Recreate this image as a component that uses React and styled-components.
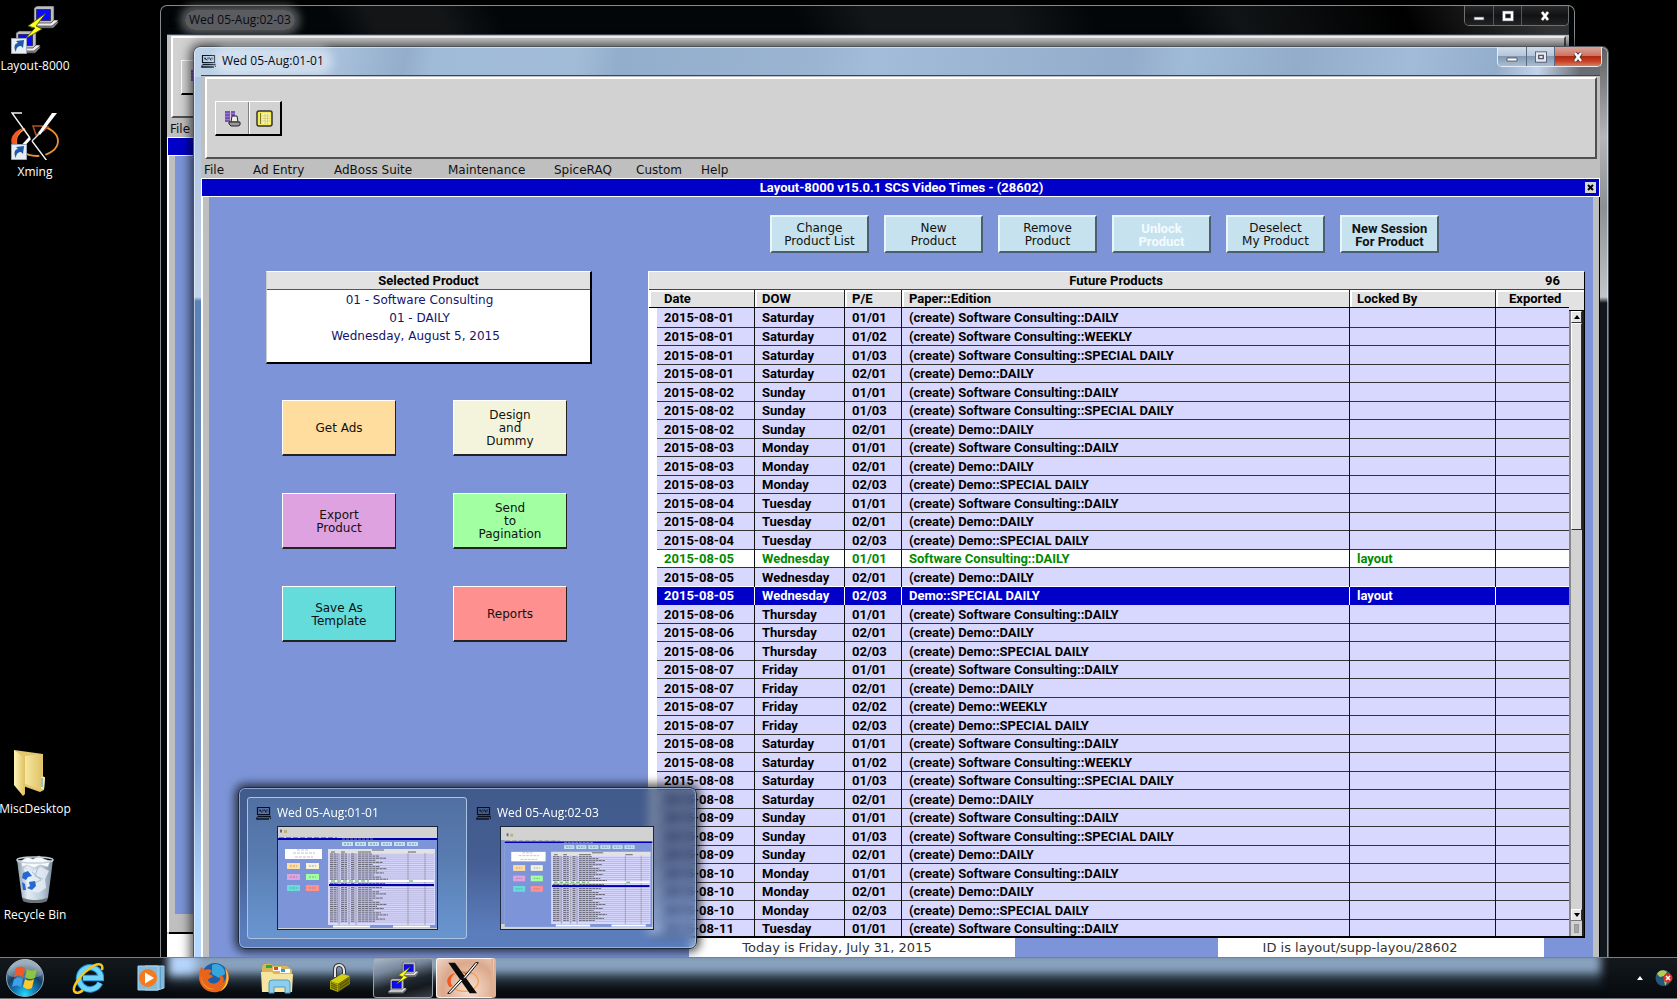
import React from "react";
import styled, { createGlobalStyle, css } from "styled-components";

const UI = `"DejaVu Sans", sans-serif`;
const BOLD = `Roboto, "Liberation Sans", sans-serif`;
const SHELL = `"Open Sans", "Noto Sans", sans-serif`;

const Global = createGlobalStyle`
  * { box-sizing: border-box; }
  body { margin: 0; background: #000; overflow: hidden; }
  button { font: inherit; color: inherit; background: none; border: 0; padding: 0; margin: 0; }
  svg { display: block; }
`;

/* ---------- desktop ---------- */

const Desktop = styled.main`
  position: relative;
  height: 100vh;
  overflow: hidden;
  background: #000;
  font-family: ${SHELL};
  font-size: 12px;
`;

const Shortcut = styled.a`
  position: absolute;
  left: 0;
  ${(p) => (p.$top !== undefined ? `top: ${p.$top}px;` : `bottom: ${p.$bottom}px;`)}
  width: 70px;
  display: flex;
  flex-direction: column;
  align-items: center;
  gap: 4px;
  color: #fff;
  text-decoration: none;
  line-height: 16px;
  white-space: nowrap;
`;

/* ---------- windows ---------- */

const Win = styled.section`
  position: absolute;
  left: ${(p) => p.$left}px;
  right: ${(p) => p.$right}px;
  top: ${(p) => p.$top}px;
  bottom: 0;
  display: flex;
  flex-direction: column;
  border-radius: 7px 7px 0 0;
  padding: ${(p) => (p.$active ? "0 8px 0 7px" : "0 5px 0 6px")};
  border: 1px solid ${(p) => (p.$active ? "#4d545c" : "#868a88")};
  border-bottom: 0;
  background: #020608;
  ${(p) =>
    p.$active &&
    css`
      box-shadow: inset 0 0 0 1px rgba(240, 248, 255, 0.55), 0 0 12px 2px rgba(0, 0, 0, 0.75);
      background:
        linear-gradient(#5c5e60 0, #b4b6ba 90px, #8c8f94 160px, #c2c5ca 250px, #11161c 256px, #11161c) right / 8px 100% no-repeat,
        linear-gradient(100deg, #bfd3e8 0, #a9c1dc 10%, #93adcb 15%, #a0bbd8 17%, #a2bcd8 27%, #93aecc 30%, #9ab4d2 44%, #a2bcd9 48%, #93accb 66%, #a0bbd8 70%, #92acca 78%, #a2bbd9 86%, #93adcc 92%, #c2d4ea 95%, #6a6e74 98%) top / 100% 30px no-repeat,
        linear-gradient(#a9c0dc 0, #c4d4ea 250px, #5b82b6 254px, #7b9dd0 75%, #b5d8ff 90%);
    `}
`;

const TitleBar = styled.header`
  flex: none;
  height: 28px;
  display: flex;
  align-items: center;
  padding-left: ${(p) => (p.$active ? 0 : 1)}px;
  gap: 6px;
  color: #0a0a14;
  background: ${(p) =>
    p.$active ? "none" : "linear-gradient(65deg, #0000 12%, #131517 15%, #131517 20%, #0000 24%, #0000 45%, #131618 50%, #131618 60%, #0000 66%, #0000 72%, #111416 76%, #000 88%, #333 98%)"};
`;

const TitleText = styled.h1`
  flex: 1;
  margin: 0;
  font: 400 12px/20px ${SHELL};
  span {
    display: inline-block;
    padding: 0 4px;
    margin-left: -4px;
    border-radius: 10px;
    background: ${(p) => (p.$active ? "rgba(235,243,252,.5)" : "rgba(120,122,124,.75)")};
    box-shadow: 0 0 8px 5px ${(p) => (p.$active ? "rgba(235,243,252,.5)" : "rgba(120,122,124,.7)")};
  }
`;

const Controls = styled.div`
  align-self: flex-start;
  display: flex;
  height: 20px;
  margin-right: ${(p) => (p.$active ? -2 : 0)}px;
  border: 1px solid ${(p) => (p.$active ? "#e6edf4" : "#6e7072")};
  border-top: 0;
  border-radius: 0 0 5px 5px;
  overflow: hidden;
`;

const Control = styled.button`
  width: ${(p) => (p.$close ? 47 : 28)}px;
  display: flex;
  align-items: center;
  justify-content: center;
  border-left: 1px solid ${(p) => (p.$active ? "#5b6c80" : "#55585a")};
  &:first-child { border-left: 0; }
  background: ${(p) =>
    !p.$active
      ? "linear-gradient(#26282a, #101214 50%, #202224)"
      : p.$close
      ? "linear-gradient(#d9a49a 0, #cc7464 45%, #b02a12 50%, #c84024 75%, #d98060)"
      : "linear-gradient(#cfdcea 0, #b7c7d9 45%, #8299b3 50%, #a9bdd2)"};
`;

const Client = styled.div`
  flex: 1;
  min-height: 0;
  display: flex;
  flex-direction: column;
  background: #bfbfbf;
  border-top: 1px solid #3c4650;
  padding-top: 1px;
  font-family: ${UI};
`;

const ToolbarPanel = styled.div`
  flex: none;
  height: 82px;
  margin: 0 3px 0 4px;
  padding: 22px 8px;
  background: #d2d2d2;
  border: 2px solid;
  border-color: #fff #505050 #505050 #fff;
`;

const ToolGroup = styled.div`
  display: inline-flex;
  height: 35px;
  border: 1px solid;
  border-color: #fff #000 #000 #fff;
  border-right-width: 2px;
  border-bottom-width: 2px;
`;

const ToolButton = styled.button`
  width: 32px;
  display: flex;
  align-items: center;
  justify-content: center;
  & + & { border-left: 1px solid #808080; box-shadow: inset 1px 0 #fff; }
`;

const MenuBar = styled.nav`
  flex: none;
  height: 19px;
  display: flex;
  padding-left: 3px;
  font-size: 12px;
  line-height: 23px;
  color: #111;
  white-space: nowrap;
`;

const MenuItem = styled.button`
  width: ${(p) => p.$width}px;
  text-align: left;
`;

const ProgramBar = styled.div`
  flex: none;
  height: 19px;
  display: flex;
  align-items: center;
  justify-content: center;
  border: 1px solid #fff;
  background: #0000c8;
  color: #fff;
  font: 700 13px/17px ${BOLD};
  padding-right: 3px;
  h2 { flex: 1; margin: 0; padding-left: 16px; font: inherit; text-align: center; }
`;

const ProgramClose = styled.button`
  width: 11px;
  height: 11px;
  background: #d8d8d8;
  display: flex;
  align-items: center;
  justify-content: center;
`;

const Body = styled.div`
  flex: 1;
  min-height: 0;
  display: flex;
  flex-direction: column;
  padding: 18px 8px 42px 0;
  background: #7d95d8;
  border-left: 6px solid #bfbfbf;
  border-right: 6px solid #bfbfbf;
  margin: 0 1px 0 2px;
  box-shadow: -2px 0 #fff, 1px 0 #000;
`;

const ActionRow = styled.div`
  flex: none;
  display: flex;
  justify-content: center;
  gap: 15px;
  padding: 0 24px 0 439px;
`;

const ActionButton = styled.button`
  width: 99px;
  height: 38px;
  padding-top: 2px;
  background: #c6e2ee;
  border: 2px solid;
  border-color: #e8f6fc #4c5f72 #4c5f72 #e8f6fc;
  font: ${(p) => (p.$strong ? `700 13px/13px ${BOLD}` : `400 12px/13px ${UI}`)};
  color: ${(p) => (p.$off ? "#f4fbff" : "#111")};
  white-space: pre-line;
`;

const Split = styled.div`
  flex: 1;
  min-height: 0;
  display: flex;
  margin-top: 18px;
`;

const Side = styled.div`
  flex: none;
  width: 439px;
  padding-left: 57px;
`;

const SelectedCard = styled.section`
  width: 326px;
  height: 93px;
  background: #fff;
  border: 1px solid;
  border-color: #fff #000 #000 #ccc;
  border-right-width: 2px;
  border-bottom-width: 2px;
  color: #14146a;
  font-size: 12px;
  line-height: 18px;
  text-align: center;
  p { margin: 0 18px 0 0; }
  p:last-child { margin-right: 26px; }
`;

const CardTitle = styled.h3`
  margin: 0 0 1px;
  height: 18px;
  background: #e2e2e2;
  border-bottom: 1px solid #555;
  color: #000;
  font: 700 13px/18px ${BOLD};
`;

const TaskGrid = styled.div`
  display: grid;
  grid-template-columns: 114px 114px;
  gap: 37px 57px;
  padding: 36px 0 0 16px;
`;

const TaskButton = styled.button`
  height: 56px;
  padding-top: 2px;
  background: ${(p) => p.$color};
  border: 1px solid;
  border-color: #fff #222 #222 #fff;
  border-bottom-width: 2px;
  font: 400 12px/13px ${UI};
  color: #111;
  white-space: pre-line;
`;

/* ---------- product list ---------- */

const ListPanel = styled.section`
  flex: 1;
  min-width: 0;
  display: flex;
  flex-direction: column;
  background: #fff;
  border: 1px solid;
  border-color: #fff #000 #000 #fff;
  border-bottom-width: 2px;
`;

const ListTitle = styled.div`
  flex: none;
  height: 18px;
  display: flex;
  background: #e2e2e2;
  border-bottom: 1px solid #444;
  font: 700 13px/18px ${BOLD};
  color: #000;
  padding-right: 24px;
  h3 { flex: 1; margin: 0; padding-left: 38px; font: inherit; text-align: center; }
`;

const ListBody = styled.div`
  flex: 1;
  min-height: 0;
  display: flex;
  overflow: hidden;
`;

const TableClip = styled.div`
  flex: 1;
  min-width: 0;
  overflow: hidden;
`;

const Table = styled.table`
  width: 100%;
  table-layout: fixed;
  border-collapse: separate;
  border-spacing: 0;
  font: 700 13px/18px ${BOLD};
  color: #000;
  th, td { padding: 0 0 0 7px; text-align: left; white-space: nowrap; overflow: hidden; }
  th {
    height: 18px;
    line-height: 17px;
    background: #e2e2e2;
    border-right: 1px solid #222;
    border-bottom: 1px solid #000;
    box-shadow: inset 2px 2px #fff;
  }
  th:first-child, td:first-child { padding-left: 15px; }
  th:last-child { border-right: 0; padding-left: 13px; }
`;

const tones = {
  plain: ["#d8d8ff", "#000", "#333"],
  before: ["#d8d8ff", "#000", "#fff"],
  mine: ["#fff", "#008a00", "#333"],
  active: ["#0000c8", "#fff", "#0000c8"],
};

const Row = styled.tr`
  td {
    height: 19px;
    background: ${(p) => tones[p.$tone][0]};
    color: ${(p) => tones[p.$tone][1]};
    box-shadow: inset 0 -1px ${(p) => tones[p.$tone][2]};
    border-right: 1px solid ${(p) => (p.$tone === "active" ? "#fff" : "#111")};
  }
  td:first-child { box-shadow: inset 8px 0 #fff, inset 0 -1px ${(p) => tones[p.$tone][2]}; }
  td:last-child { border-right: 0; }
  &:nth-child(even) td { height: 18px; }
  &:first-child td { height: 20px; }
`;

const ScrollColumn = styled.div`
  flex: none;
  width: 15px;
  display: flex;
  flex-direction: column;
  background: #d2d2d2;
  &::before {
    content: "";
    flex: none;
    height: 18px;
    background: #e2e2e2;
    border-top: 2px solid #fff;
    border-bottom: 1px solid #000;
  }
`;

const Track = styled.div`
  flex: 1;
  display: flex;
  flex-direction: column;
  border-left: 2px solid #888;
  border-right: 2px solid #222;
`;

const ScrollButton = styled.button`
  flex: none;
  height: 12px;
  display: flex;
  align-items: center;
  justify-content: center;
  background: #e6e6e6;
  border: 1px solid;
  border-color: #fff #333 #333 #fff;
`;

const Thumb = styled.div`
  flex: none;
  height: 207px;
  background: #e2e2e2;
  border: 1px solid;
  border-color: #fff #333 #333 #fff;
`;

const Corner = styled.div`
  flex: none;
  height: 15px;
  background: #a4a4a4;
  border: 3px solid #d2d2d2;
  box-shadow: inset 0 0 0 1px #999, 0 -1px #777;
`;

const Spacer = styled.div`
  flex: 1;
`;

const StatusRow = styled.div`
  flex: none;
  height: 19px;
  display: flex;
  justify-content: space-between;
  padding: 0 41px 0 480px;
`;

const Status = styled.output`
  width: 326px;
  background: #fff;
  color: #333;
  font-size: 13px;
  line-height: 20px;
  text-align: center;
  white-space: nowrap;
  padding-right: ${(p) => p.$pad}px;
`;

/* ---------- back window contents ---------- */

const BackBody = styled.div`
  flex: 1;
  margin: 0 3px 23px 2px;
  border: 6px solid #bfbfbf;
  border-top-width: 0;
  border-bottom-width: 18px;
  background: #7d95d8;
  box-shadow: -2px 0 #fff, 0 2px #000;
`;

const BackStatus = styled.div`
  flex: none;
  height: 65px;
  margin-top: -21px;
  background: #fff;
`;

/* ---------- taskbar ---------- */

const Taskbar = styled.footer`
  position: absolute;
  left: 0;
  right: 0;
  bottom: 0;
  height: 42px;
  display: flex;
  align-items: center;
  background: linear-gradient(#14191d, #060a0e);
  border-top: 1px solid #7b8084;
  border-bottom: 1px solid #6f7377;
  overflow: hidden;
  isolation: isolate;
`;

const Glass = styled.div`
  position: absolute;
  z-index: -1;
  left: 168px;
  right: 76px;
  top: -6px;
  height: 33px;
  filter: blur(4px);
  background:
    linear-gradient(90deg, #b5d4fa 0, #b5d4fa 22px, transparent 34px) top / 100% 24px no-repeat,
    linear-gradient(#86a0bc 0, #8aa4c0 62%, #2f3d4b 68%, #1d2730 100%);
`;

const StartButton = styled.button`
  width: 50px;
  margin-right: 8px;
  display: flex;
  justify-content: center;
`;

const AppList = styled.nav`
  flex: 1;
  display: flex;
  gap: 3px;
  height: 40px;
`;

const AppButton = styled.button`
  width: 60px;
  display: flex;
  align-items: center;
  justify-content: center;
  border-radius: 3px;
  ${(p) =>
    p.$state === "open" &&
    css`
      border: 1px solid #9aa3ac;
      background: linear-gradient(165deg, #a9b8c8 0, #77869a 30%, #20272f 58%, #15191e 75%, #3a4149 100%);
    `}
  ${(p) =>
    p.$state === "hot" &&
    css`
      border: 1px solid #fff3ea;
      border-right: 5px double #e0b094;
      padding-right: 2px;
      background: radial-gradient(circle at 60% 80%, #f9e0d0 0, #dba88c 60%, #efd6c8 100%);
    `}
`;

const Tray = styled.div`
  display: flex;
  align-items: center;
  gap: 11px;
  padding-right: 4px;
`;

/* ---------- taskbar preview ---------- */

const Preview = styled.aside`
  position: absolute;
  left: 238px;
  bottom: 50px;
  width: 459px;
  height: 162px;
  display: flex;
  padding: 9px 8px;
  border-radius: 7px;
  border: 1px solid #1c2a40;
  box-shadow: inset 0 0 0 1px rgba(190, 215, 245, 0.6), 0 0 10px 3px rgba(0, 0, 0, 0.7);
  background: linear-gradient(rgba(35, 60, 100, 0.66), rgba(40, 65, 110, 0.66) 45%, rgba(70, 110, 170, 0.6) 90%);
  backdrop-filter: blur(4px);
`;

const PreviewTile = styled.button`
  width: 220px;
  height: 142px;
  padding: 5px 8px;
  display: flex;
  flex-direction: column;
  align-items: center;
  gap: 3px;
  border: 1px solid transparent;
  border-radius: 3px;
  ${(p) =>
    p.$current &&
    css`
      border-color: #a9c4e2;
      background: linear-gradient(rgba(110, 150, 200, 0.35), rgba(110, 160, 215, 0.65));
    `}
`;

const PreviewTitle = styled.span`
  align-self: stretch;
  display: flex;
  align-items: center;
  gap: 6px;
  height: 20px;
  color: #fff;
  font: 400 12px/20px ${SHELL};
`;

/* ---------- drawings ---------- */

const XClientIcon = ({ dark = "#0a1020" }) => (
  <svg width="15" height="15" viewBox="0 0 15 15" fill="none" stroke={dark}>
    <path d="M1.500 1.500h12v7h-12z" strokeWidth="1.200" />
    <path d="M1.500 10.500h12.500v1M1 11.500v1.500h12" strokeWidth="1.500" />
    <path d="M4 3.500v2M4 4l2 2.500M7 3.500v2M8.500 3.500l1.500 3M11 3.500v2M14.500 12v1" />
  </svg>
);

const Badge = () => (
  <g>
    <path d="M.5 32.500h15v15H.5z" fill="#e9eef4" stroke="#9aa8b8" />
    <path d="M5 46c-3-5-1-9 2-9l-2-2 8-1-1 8-2-2c-3 0-5 2-5 6z" fill="#1e5aa8" />
  </g>
);

const Monitor = () => (
  <g stroke="#222" strokeWidth=".6">
    <path d="M23 2l3-2h17v15l-3 3H23z" fill="#bdbdbd" />
    <path d="M25.500 3.500h14v11h-14z" fill="#0a0aff" stroke="#111" />
    <path d="M20 19l3-2h17l3-3h4v3l-5 5H20z" fill="#ececec" />
    <path d="M20 20h21l6-5v2l-5 5H20z" fill="#8a8a8a" />
  </g>
);

const PuttyIcon = ({ size = 48, badge }) => (
  <svg width={size} height={size} viewBox="0 0 48 48">
    <Monitor />
    <g transform="translate(-18 25)">
      <Monitor />
    </g>
    <path d="M35 7L17 20l7 2-10 11 17-10-6-3z" fill="#ffff20" stroke="#4a4a00" strokeWidth=".8" />
    {badge && <Badge />}
  </svg>
);

const XmingIcon = ({ size = 48, badge, light }) => (
  <svg width={size} height={size} viewBox="0 0 48 48" fill="none">
    <ellipse cx="26" cy="29" rx="21" ry="15" stroke={light ? "#f0a050" : "#e89038"} strokeWidth="1.800" />
    <path d="M12 16C0 20-3 30 4 38l4-2c-5-7-2-14 4-20z" fill="#f05a22" />
    <path d="M22 14l6 2 9-1-5 5c-4-1-7-3-10-6z" fill="#b8501c" />
    {light ? (
      <>
        <path d="M2 1h10l33 46H34z" fill="#0a0a0a" />
        <path d="M43 1h4L28 24l-5 1zM21 25l2 3L5 47H1z" fill="#fff" stroke="#111" strokeWidth="1.500" />
      </>
    ) : (
      <>
        <path d="M4 1h38L26 24l-5 4z" fill="#000" />
        <path d="M22 14h8l7 1-8 6-4 2z" fill="none" stroke="#b8501c" strokeWidth="1.500" />
        <path d="M22 28l4-2 10 20-6 2z" fill="#000" />
        <path d="M11 1H1l18 25M21 29l15 20" stroke="#f4f4f4" strokeWidth="1.400" />
        <path d="M46 1h-5L27 21l2 2z" fill="#fff" />
        <path d="M19 26L8 38" stroke="#fff" strokeWidth="3" />
        <path d="M28 22l-7 7" stroke="#ddd" strokeWidth="1.500" />
      </>
    )}
    {badge && <Badge />}
  </svg>
);

const FolderIcon = () => (
  <svg width="48" height="48" viewBox="0 0 48 48">
    <defs>
      <linearGradient id="fold" x1="0" x2="1">
        <stop offset="0" stopColor="#fff6b8" />
        <stop offset="1" stopColor="#dfc062" />
      </linearGradient>
    </defs>
    <path d="M3 1l29 4v22l2 2-1 12-4 2-17-6z" fill="#e2c76c" />
    <path d="M14 7l17-2v36l-17-6z" fill="url(#fold)" opacity=".7" />
    <path d="M3 1l11 8v36l-2 2L3 36z" fill="url(#fold)" />
    <path d="M30 28h4l-1 12h-3z" fill="#f7e9a0" />
    <path d="M31 29v9" stroke="#6bb8e8" strokeWidth="1.500" />
  </svg>
);

const BinIcon = () => (
  <svg width="48" height="48" viewBox="0 0 48 48">
    <defs>
      <linearGradient id="bin" x1="0" x2="1">
        <stop offset="0" stopColor="#8998a8" />
        <stop offset=".3" stopColor="#e4edf5" />
        <stop offset=".7" stopColor="#b8cad9" />
        <stop offset="1" stopColor="#77889a" />
      </linearGradient>
    </defs>
    <path d="M6 5h36l-5 38c-4 5-22 5-26 0z" fill="url(#bin)" />
    <path d="M10 6l6-4 6 2 6-3 5 3 6 2-2 6-8-2-6 3-7-3-5 2z" fill="#f8fbfe" stroke="#a9b8c8" strokeWidth=".6" />
    <path d="M13 13l8 4 9-5 8 4-4 8 1 9-8 5-9-3-3-9z" fill="#e7eff6" opacity=".8" />
    <path d="M21 17l9 8-8 4M27 12l-3 9 8 3" stroke="#a9bccc" fill="none" />
    <path d="M12 18l5-2 4 5-4 1-2 3-4-2zM11 27l3 2 1 6h-3zM18 27l6-1 1 5-4 4-5-2 3-2z" fill="#2468d0" />
    <path d="M11 42c5 4 21 4 26 0l-1 4c-5 3-19 3-24 0z" fill="#6c737a" />
    <ellipse cx="24" cy="5" rx="18" ry="3" fill="none" stroke="#c4ced8" strokeWidth="1.500" />
  </svg>
);

const StartOrb = () => (
  <svg width="40" height="40" viewBox="0 0 40 40">
    <defs>
      <radialGradient id="orb" cx=".5" cy=".95" r=".85">
        <stop offset="0" stopColor="#1fe0ff" />
        <stop offset=".3" stopColor="#1484c0" />
        <stop offset=".65" stopColor="#123f66" />
        <stop offset="1" stopColor="#7d95a8" />
      </radialGradient>
    </defs>
    <circle cx="20" cy="20" r="18.500" fill="url(#orb)" stroke="#8fa5b5" />
    <path d="M3 17a17 16 0 0 1 34 0c-10 5-24 5-34 0z" fill="#fff" opacity=".25" />
    <path d="M11 10c3-2 6-2 9 0l-2 9c-3-2-6-2-9 0z" fill="#f0592a" />
    <path d="M22 11c3 2 6 2 10 0l-2 9c-4 2-7 1-10-1z" fill="#8cc63e" />
    <path d="M9 21c3-2 6-2 9 0l-2 8c-3-2-6-2-9 0z" fill="#3fa0e8" />
    <path d="M20 21c3 2 6 2 9 0l-2 9c-3 2-6 1-9-1z" fill="#fdc92c" />
  </svg>
);

const IeIcon = () => (
  <svg width="32" height="32" viewBox="0 0 32 32" fill="none">
    <path d="M28 21a11 11 0 1 1 1-5H11" stroke="#1c8fd8" strokeWidth="6.500" />
    <path d="M28 21a11 11 0 1 1 1-5H11" stroke="#6fd4fa" strokeWidth="4.500" />
    <path d="M30 8c2-8-6-7-13-1C7 14-1 27 3 30c2 2 6 0 8-2" stroke="#f8c617" strokeWidth="2.500" />
  </svg>
);

const MediaIcon = () => (
  <svg width="28" height="28" viewBox="0 0 28 28">
    <path d="M8 2h19v22l-6 2H8z" fill="#5f9fc8" stroke="#a8d4ee" />
    <path d="M22 2v23M25 2v22" stroke="#a8d4ee" />
    <path d="M1 2h20v24H1z" fill="#86bbdc" stroke="#a9d5ee" />
    <circle cx="11" cy="14" r="9" fill="#f47a20" />
    <path d="M8 8.500l9 5.500-9 5.500z" fill="#fff" />
  </svg>
);

const FirefoxIcon = () => (
  <svg width="32" height="32" viewBox="0 0 32 32">
    <circle cx="17" cy="14" r="13" fill="#1c5fa8" />
    <path d="M14 3c6-3 13 2 13 9l-6 4-7-4z" fill="#38a5dc" />
    <path d="M3 5l4 3c2-1 5-1 7 1l-3 3 4 2c-1 2-4 2-5 4 1 4 7 5 11 1 2-2 1-4 0-6 4 0 6 3 4 8 5-5 4-12 2-16 6 6 5 18-3 23C15 34 2 28 1 16 1 12 2 8 3 5z" fill="#e8641c" />
    <path d="M27 6c6 8 4 20-6 24 8-6 9-14 6-24z" fill="#fdc830" />
    <path d="M3 12c0 10 7 15 14 15-6 2-15-3-14-15z" fill="#f59a2a" />
  </svg>
);

const ExplorerIcon = () => (
  <svg width="34" height="32" viewBox="0 0 34 32">
    <path d="M2 5l2-3h7l2 2h14l5 4v22H2z" fill="#d9b65a" />
    <path d="M6 3h6v3H6z" fill="#20b040" />
    <path d="M13 5h8v4h-8z" fill="#fff" />
    <path d="M14 5h4v3h-4z" fill="#e04030" />
    <path d="M20 7h10v4H20z" fill="#fff" />
    <path d="M21 7h4v3h-4z" fill="#28a0e0" />
    <path d="M1 10h11l2 2h19l-1 18H2z" fill="#f7e4a0" />
    <path d="M9 31V21q0-3 3-3h15q3 0 3 3v10h-5v-6H14v6z" fill="#8fcdec" stroke="#4a9cc8" />
  </svg>
);

const LockIcon = () => (
  <svg width="24" height="30" viewBox="0 0 24 30">
    <path d="M7 14V7q0-5 4-5t5 5v4" fill="none" stroke="#333" strokeWidth="4" />
    <path d="M7 14V7q0-5 4-5t5 5v4" fill="none" stroke="#e4e4e4" strokeWidth="2" />
    <path d="M2 18l12-7 8 2-12 8z" fill="#d4d010" />
    <path d="M2 18l8 3v8l-8-3z" fill="#a8a400" />
    <path d="M10 21l12-8v8l-12 8z" fill="#7c7800" />
    <path d="M3 20l6 3M3 22l6 3M3 24l6 3M12 22l9-6M12 25l9-6" stroke="#4c4a00" />
  </svg>
);

const GlobeIcon = () => (
  <svg width="18" height="18" viewBox="0 0 18 18">
    <circle cx="8.500" cy="9" r="8" fill="#24587c" />
    <path d="M2 5c3-5 8-4 10-2l-3 4-4 1zM9 10l4 1-3 6z" fill="#b4cc50" />
    <circle cx="13" cy="9" r="4.500" fill="#d83028" />
    <path d="M11 7l4 4M15 7l-4 4" stroke="#fff" strokeWidth="1.500" />
  </svg>
);

const PrintIcon = () => (
  <svg width="17" height="17" viewBox="0 0 17 17">
    <path d="M1 1h5v11H1zM7 1h4v5H7z" fill="#7a50c0" />
    <path d="M1 3.500h10M1 6.500h5M1 9.500h5" stroke="#a890d8" strokeWidth=".6" />
    <path d="M8 6h5l1 6H7z" fill="#eee" stroke="#222" />
    <path d="M5 12h11v3l-2 1H7l-2-2z" fill="#999" stroke="#222" />
  </svg>
);

const LedgerIcon = () => (
  <svg width="17" height="17" viewBox="0 0 17 17">
    <rect x="1" y="1" width="15" height="15" rx="2" fill="#f4ec50" stroke="#333" strokeWidth="1.500" />
    <path d="M6 3.500h8v10H6z" fill="#f6f2b8" />
    <path d="M4.500 3v11" stroke="#807828" />
    <path d="M6 6h8M6 8.500h8M6 11h8M9 4v10M11.500 4v10" stroke="#c8c060" strokeWidth=".6" />
  </svg>
);

const Glyph = ({ kind, filled }) => (
  <svg width="14" height="12" viewBox="0 0 14 12" fill="none">
    {kind === "min" && <path d="M2 7h10v3H2z" fill="#fff" stroke="#445" strokeWidth=".8" />}
    {kind === "max" && (
      <>
        <path d="M3 2.500h8v7H3z" stroke="#445" strokeWidth="4" />
        <path d="M3 2.500h8v7H3z" stroke={filled ? "#e4e8f0" : "#fff"} strokeWidth="2.400" />
        {filled && <path d="M5 4.500h4v3H5z" fill="#dfe5ee" stroke="#445" strokeWidth=".8" />}
      </>
    )}
    {kind === "close" && (
      <>
        <path d="M4 2l6 8M10 2l-6 8" stroke="#433" strokeWidth="4" />
        <path d="M4 2l6 8M10 2l-6 8" stroke="#fff" strokeWidth="2.400" />
      </>
    )}
  </svg>
);

const Arrow = ({ down, color = "#000", width = 6 }) => (
  <svg width={width} height="4" viewBox="0 0 6 4">
    <path d={down ? "M0 0h6L3 4z" : "M0 4h6L3 0z"} fill={color} />
  </svg>
);

const MiniScreen = ({ width, shifted }) => {
  const swatches = ["#ffdd9f", "#f4f4dc", "#dfa2e0", "#a2ffa2", "#64dcdc", "#ff9090"];
  return (
    <svg width={width} height="104" viewBox="0 0 161 104" preserveAspectRatio="none">
      <rect x=".5" y=".5" width="160" height="103" fill="#d2d2d2" stroke="#1a2438" />
      {shifted && <path d="M1 14h4v84H1z" fill="#7d95d8" />}
      <g transform={shifted ? "translate(4 4) scale(.97 .95)" : undefined}>
        <rect x="1" y="12" width="159" height="2" fill="#0000b0" />
        <rect x="1" y="14" width="159" height="88" fill="#7d95d8" />
        <path d="M3 5h2" stroke="#667" strokeWidth="3" />
        <path d="M7 5.500h3" stroke="#bbb27a" strokeWidth="3" />
        <path d="M2 11.500h58" stroke="#666" strokeWidth=".7" strokeDasharray="5 2" />
        <path d="M65 13h32" stroke="#aab" strokeWidth=".7" strokeDasharray="3 1" />
        {[0, 1, 2, 3, 4, 5].map((i) => (
          <g key={i}>
            <rect x={65 + i * 13} y="16" width="11" height="4" fill="#c6e2ee" />
            <path d={`M${67 + i * 13} 18h7`} stroke="#567" strokeWidth=".7" strokeDasharray="2 1" />
          </g>
        ))}
        <rect x="8" y="23" width="37" height="10" fill="#fff" />
        <path d="M20 24h12M16 27h22M18 31h18" stroke="#99a" strokeWidth=".6" strokeDasharray="3 1" />
        {swatches.map((c, i) => (
          <g key={c}>
            <rect x={10 + (i % 2) * 19} y={37 + Math.floor(i / 2) * 11} width="13" height="6" fill={c} />
            <path d={`M${13 + (i % 2) * 19} ${40 + Math.floor(i / 2) * 11}h7`} stroke="#777" strokeWidth=".6" strokeDasharray="2 1" />
          </g>
        ))}
        <rect x="51" y="23" width="107" height="76" fill="#d8d8ff" />
        <rect x="51" y="23" width="107" height="4" fill="#e2e2e2" />
        <path d="M95 24h12M54 26h4M64 26h4M81 26h13M131 26h8" stroke="#444" strokeWidth=".8" />
        {Array.from({ length: 33 }, (_, i) => {
          const y = 28 + i * 2.1;
          return (
            <g key={i}>
              <path d={`M53 ${y + 1}h104`} stroke="#8888aa" strokeWidth=".4" />
              <path
                d={`M53 ${y}h8M64 ${y}h6M74 ${y}h4M81 ${y}h${14 + ((i * 7) % 17)}`}
                stroke="#333"
                strokeWidth=".7"
                strokeDasharray="3 .6"
              />
            </g>
          );
        })}
        <path d="M62 27v72M72 27v72M79 27v72M131 27v72M148 27v72" stroke="#777" strokeWidth=".5" />
        <rect x="52" y="54" width="105" height="2" fill="#fff" />
        <path d="M54 55h38M132 55h5" stroke="#4a4" strokeDasharray="4 2" />
        <rect x="52" y="58" width="105" height="2" fill="#0000b0" />
        <path d="M56 100.500h37M116 100.500h37" stroke="#fff" strokeWidth="2" />
      </g>
    </svg>
  );
};

/* ---------- data ---------- */

const S = "Software Consulting::";
const D = "Demo::";
const days = [
  ["01", "Saturday", [["01/01", S + "DAILY"], ["01/02", S + "WEEKLY"], ["01/03", S + "SPECIAL DAILY"], ["02/01", D + "DAILY"]]],
  ["02", "Sunday", [["01/01", S + "DAILY"], ["01/03", S + "SPECIAL DAILY"], ["02/01", D + "DAILY"]]],
  ["03", "Monday", [["01/01", S + "DAILY"], ["02/01", D + "DAILY"], ["02/03", D + "SPECIAL DAILY"]]],
  ["04", "Tuesday", [["01/01", S + "DAILY"], ["02/01", D + "DAILY"], ["02/03", D + "SPECIAL DAILY"]]],
  ["05", "Wednesday", [["01/01", S + "DAILY", "mine"], ["02/01", D + "DAILY", "before"], ["02/03", D + "SPECIAL DAILY", "active"]]],
  ["06", "Thursday", [["01/01", S + "DAILY"], ["02/01", D + "DAILY"], ["02/03", D + "SPECIAL DAILY"]]],
  ["07", "Friday", [["01/01", S + "DAILY"], ["02/01", D + "DAILY"], ["02/02", D + "WEEKLY"], ["02/03", D + "SPECIAL DAILY"]]],
  ["08", "Saturday", [["01/01", S + "DAILY"], ["01/02", S + "WEEKLY"], ["01/03", S + "SPECIAL DAILY"], ["02/01", D + "DAILY"]]],
  ["09", "Sunday", [["01/01", S + "DAILY"], ["01/03", S + "SPECIAL DAILY"], ["02/01", D + "DAILY"]]],
  ["10", "Monday", [["01/01", S + "DAILY"], ["02/01", D + "DAILY"], ["02/03", D + "SPECIAL DAILY"]]],
  ["11", "Tuesday", [["01/01", S + "DAILY"]]],
];

const products = days.flatMap(([day, dow, editions]) =>
  editions.map(([pe, paper, tone = "plain"]) => {
    const locked = tone === "mine" || tone === "active";
    return { date: `2015-08-${day}`, dow, pe, tone, paper: locked ? paper : `(create) ${paper}`, lockedBy: locked ? "layout" : "" };
  })
);

const menus = [
  ["File", 49],
  ["Ad Entry", 81],
  ["AdBoss Suite", 114],
  ["Maintenance", 106],
  ["SpiceRAQ", 82],
  ["Custom", 65],
  ["Help", 40],
];

const actions = [
  { label: "Change\nProduct List" },
  { label: "New\nProduct" },
  { label: "Remove\nProduct" },
  { label: "Unlock\nProduct", strong: true, off: true },
  { label: "Deselect\nMy Product" },
  { label: "New Session\nFor Product", strong: true },
];

const tasks = [
  ["Get Ads", "#ffdd9f"],
  ["Design\nand\nDummy", "#f4f4dc"],
  ["Export\nProduct", "#dfa2e0"],
  ["Send\nto\nPagination", "#a2ffa2"],
  ["Save As\nTemplate", "#64dcdc"],
  ["Reports", "#ff9090"],
];

/* ---------- pieces ---------- */

const Frame = ({ title, active, left, right, top, children }) => (
  <Win $active={active} $left={left} $right={right} $top={top} aria-label={title}>
    <TitleBar $active={active}>
      <XClientIcon dark={active ? "#0a1828" : "#000"} />
      <TitleText $active={active}>
        <span>{title}</span>
      </TitleText>
      <Controls $active={active}>
        <Control $active={active} aria-label="Minimize"><Glyph kind="min" /></Control>
        <Control $active={active} aria-label="Maximize"><Glyph kind="max" filled={active} /></Control>
        <Control $active={active} $close aria-label="Close"><Glyph kind="close" /></Control>
      </Controls>
    </TitleBar>
    <Client>
      <ToolbarPanel>
        <ToolGroup>
          <ToolButton aria-label="Print"><PrintIcon /></ToolButton>
          <ToolButton aria-label="Ledger"><LedgerIcon /></ToolButton>
        </ToolGroup>
      </ToolbarPanel>
      {children}
    </Client>
  </Win>
);

const ProductList = () => (
  <ListPanel>
    <ListTitle>
      <h3>Future Products</h3>
      <span>96</span>
    </ListTitle>
    <ListBody>
      <TableClip>
        <Table>
          <colgroup>
            <col style={{ width: 106 }} />
            <col style={{ width: 90 }} />
            <col style={{ width: 57 }} />
            <col />
            <col style={{ width: 146 }} />
            <col style={{ width: 73 }} />
          </colgroup>
          <thead>
            <tr>
              <th>Date</th>
              <th>DOW</th>
              <th>P/E</th>
              <th>Paper::Edition</th>
              <th>Locked By</th>
              <th>Exported</th>
            </tr>
          </thead>
          <tbody>
            {products.map((p, i) => (
              <Row key={i} $tone={p.tone}>
                <td>{p.date}</td>
                <td>{p.dow}</td>
                <td>{p.pe}</td>
                <td>{p.paper}</td>
                <td>{p.lockedBy}</td>
                <td />
              </Row>
            ))}
          </tbody>
        </Table>
      </TableClip>
      <ScrollColumn>
        <Track>
          <ScrollButton aria-label="Scroll up"><Arrow /></ScrollButton>
          <Thumb />
          <Spacer />
          <ScrollButton aria-label="Scroll down"><Arrow down /></ScrollButton>
          <Corner />
        </Track>
      </ScrollColumn>
    </ListBody>
  </ListPanel>
);

export default function App() {
  return (
    <Desktop>
      <Global />
      <Shortcut href="#layout" $top={6}><PuttyIcon badge />Layout-8000</Shortcut>
      <Shortcut href="#xming" $top={112}><XmingIcon badge />Xming</Shortcut>
      <Shortcut href="#misc" $bottom={182}><FolderIcon />MiscDesktop</Shortcut>
      <Shortcut href="#bin" $bottom={76}><BinIcon />Recycle Bin</Shortcut>

      <Frame title="Wed 05-Aug:02-03" left={160} right={102} top={5}>
        <MenuBar><MenuItem $width={49}>File</MenuItem></MenuBar>
        <ProgramBar />
        <BackBody />
        <BackStatus />
      </Frame>

      <Frame title="Wed 05-Aug:01-01" active left={193} right={68} top={46}>
        <MenuBar>
          {menus.map(([label, width]) => (
            <MenuItem key={label} $width={width}>{label}</MenuItem>
          ))}
        </MenuBar>
        <ProgramBar>
          <h2>Layout-8000 v15.0.1 SCS Video Times - (28602)</h2>
          <ProgramClose aria-label="Close program">
            <svg width="9" height="9" viewBox="0 0 9 9">
              <path d="M2 2l5 5M7 2L2 7" stroke="#000" strokeWidth="2" />
            </svg>
          </ProgramClose>
        </ProgramBar>
        <Body>
          <ActionRow>
            {actions.map((a) => (
              <ActionButton key={a.label} $strong={a.strong} $off={a.off}>{a.label}</ActionButton>
            ))}
          </ActionRow>
          <Split>
            <Side>
              <SelectedCard>
                <CardTitle>Selected Product</CardTitle>
                <p>01 - Software Consulting</p>
                <p>01 - DAILY</p>
                <p>Wednesday, August 5, 2015</p>
              </SelectedCard>
              <TaskGrid>
                {tasks.map(([label, color]) => (
                  <TaskButton key={label} $color={color}>{label}</TaskButton>
                ))}
              </TaskGrid>
            </Side>
            <ProductList />
          </Split>
          <StatusRow>
            <Status $pad={30}>Today is Friday, July 31, 2015</Status>
            <Status $pad={42}>ID is layout/supp-layou/28602</Status>
          </StatusRow>
        </Body>
      </Frame>

      <Preview>
        <PreviewTile $current>
          <PreviewTitle><XClientIcon />Wed 05-Aug:01-01</PreviewTitle>
          <MiniScreen width={161} />
        </PreviewTile>
        <PreviewTile>
          <PreviewTitle><XClientIcon />Wed 05-Aug:02-03</PreviewTitle>
          <MiniScreen width={154} shifted />
        </PreviewTile>
      </Preview>

      <Taskbar>
        <Glass />
        <StartButton aria-label="Start"><StartOrb /></StartButton>
        <AppList>
          <AppButton aria-label="Internet Explorer"><IeIcon /></AppButton>
          <AppButton aria-label="Media Player"><MediaIcon /></AppButton>
          <AppButton aria-label="Firefox"><FirefoxIcon /></AppButton>
          <AppButton aria-label="Explorer"><ExplorerIcon /></AppButton>
          <AppButton aria-label="Lock"><LockIcon /></AppButton>
          <AppButton $state="open" aria-label="Layout-8000"><PuttyIcon size={32} /></AppButton>
          <AppButton $state="hot" aria-label="Xming"><XmingIcon size={32} light /></AppButton>
        </AppList>
        <Tray>
          <button aria-label="Show hidden icons"><Arrow color="#fff" width={8} /></button>
          <GlobeIcon />
        </Tray>
      </Taskbar>
    </Desktop>
  );
}
